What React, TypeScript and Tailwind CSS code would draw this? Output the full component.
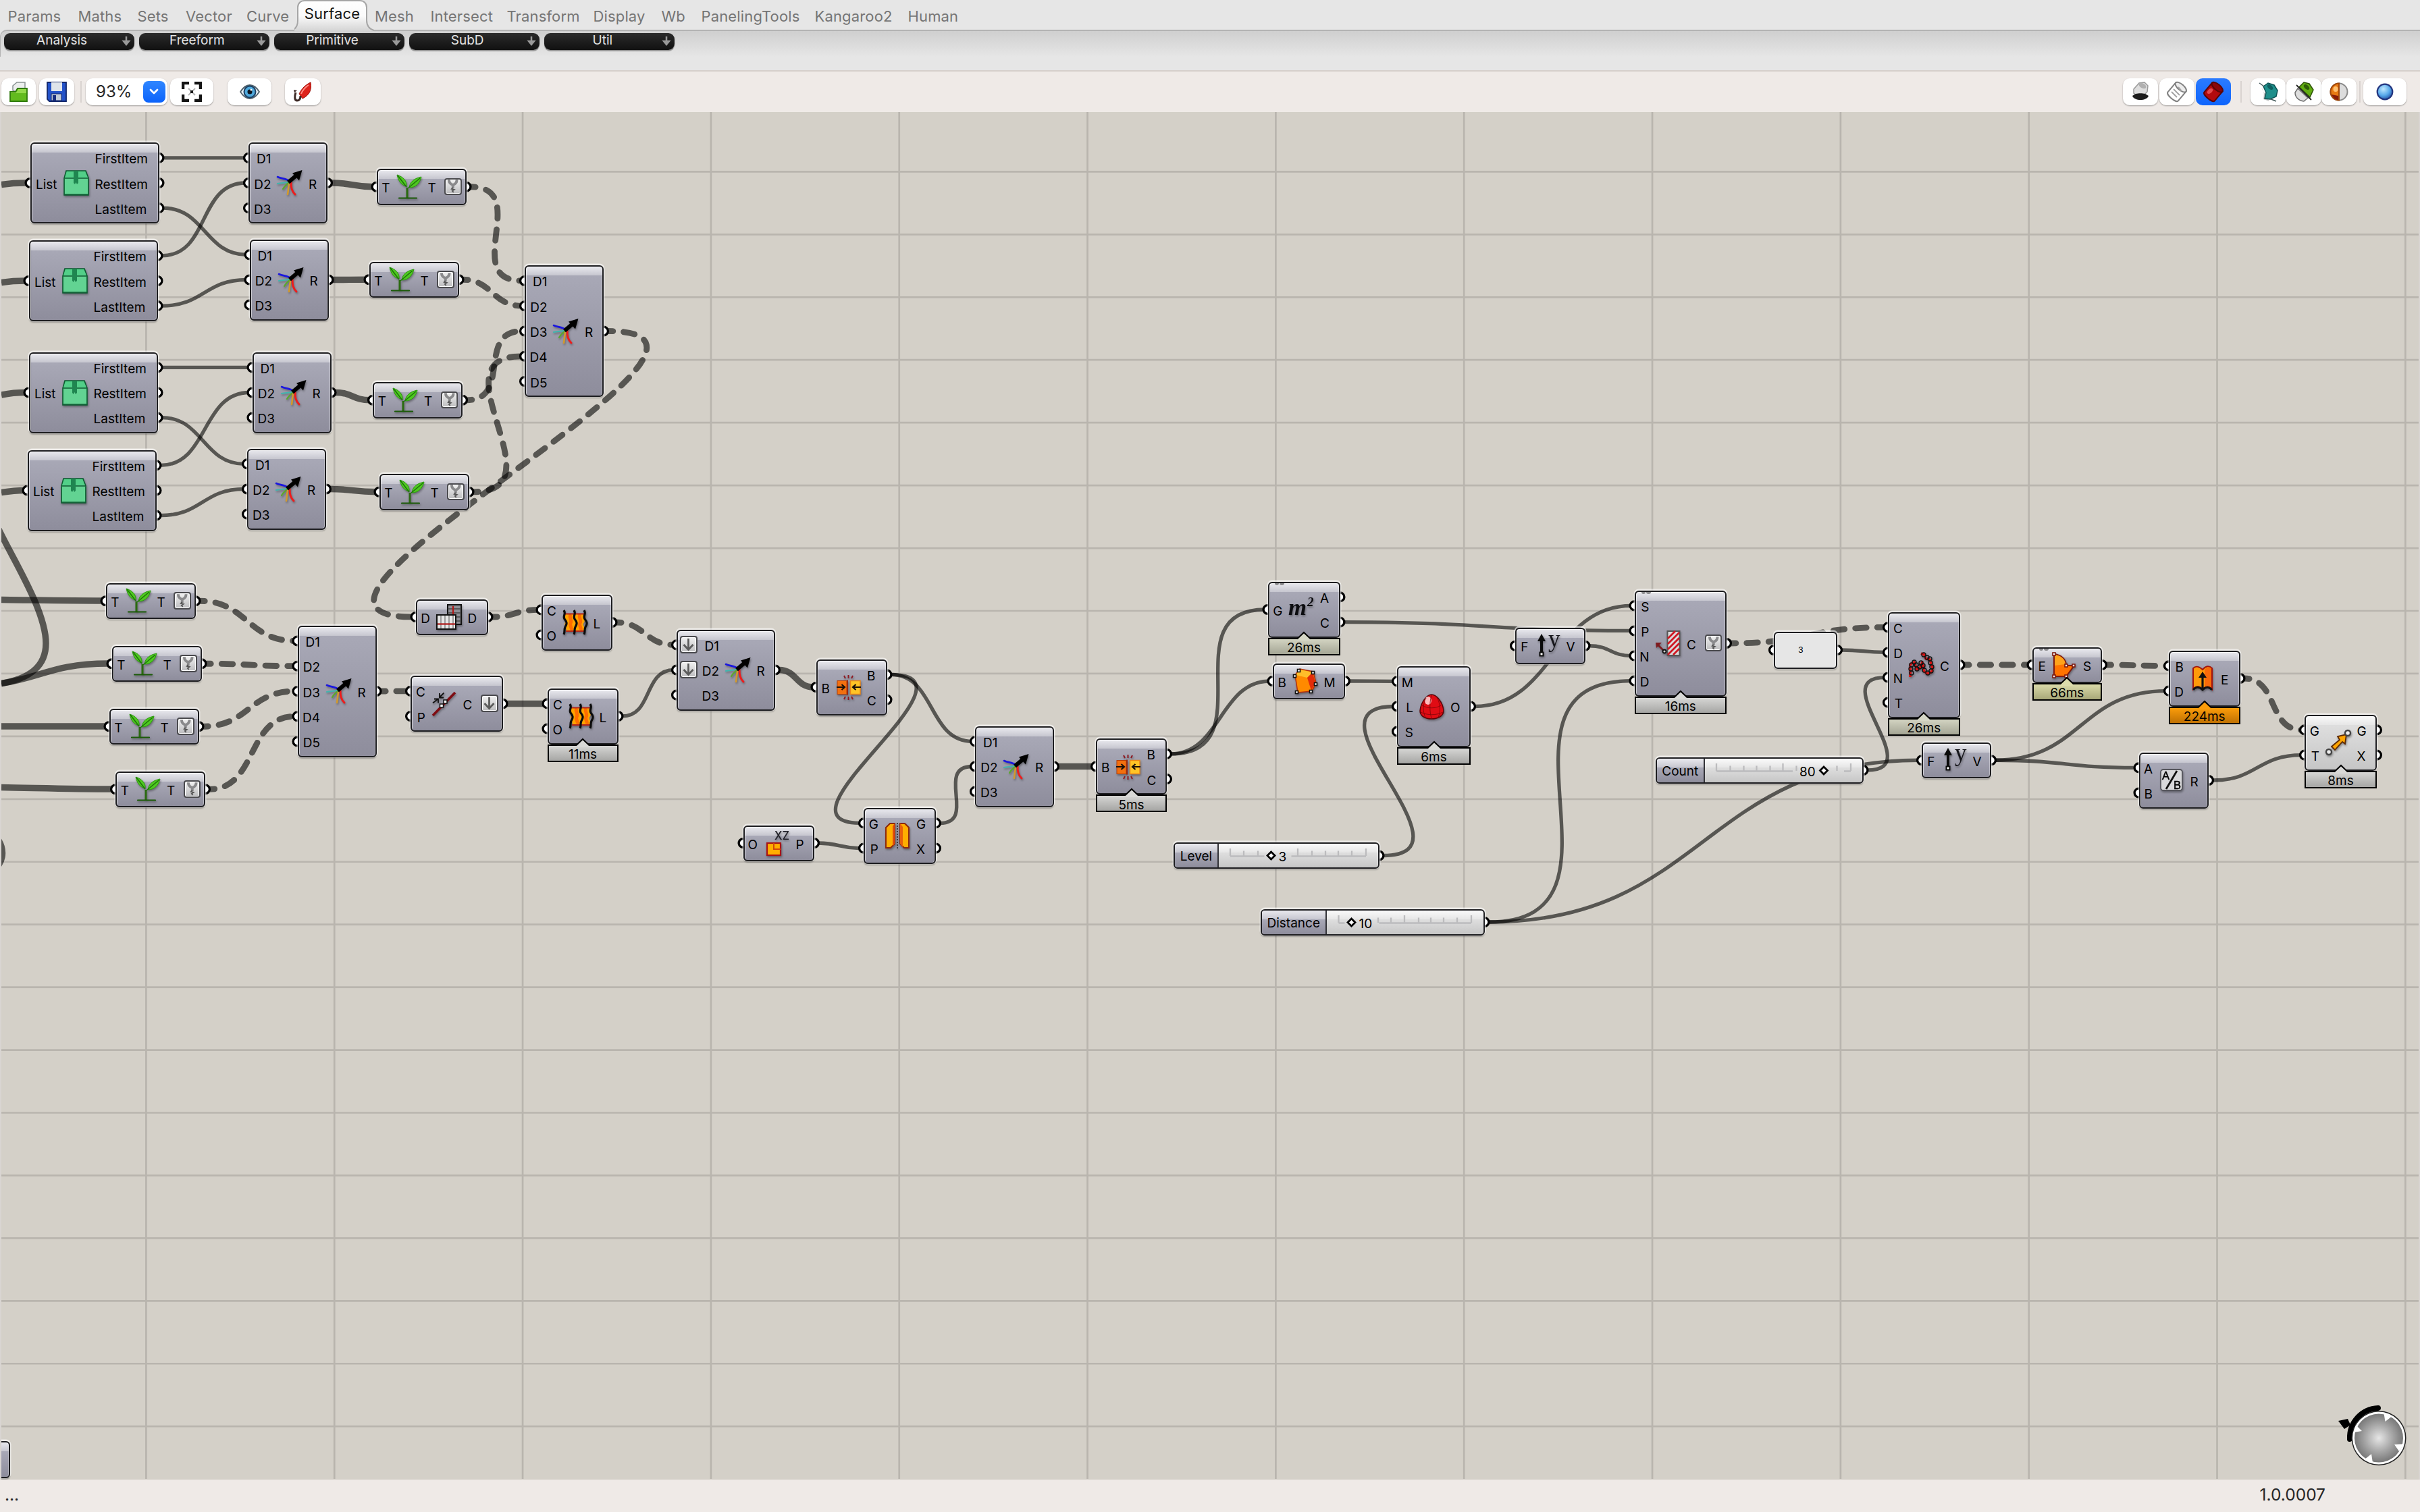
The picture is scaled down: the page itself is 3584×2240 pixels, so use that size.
import type { ReactNode } from 'react';

/* ------------------------------------------------------------------ */
/* Component icons                                                     */
/* ------------------------------------------------------------------ */

const coils: [number, number][] = [
  [4, 31], [3, 25], [4, 19], [8, 15], [11, 19], [12, 25], [16, 22], [18, 16], [21, 20], [23, 27],
  [28, 31], [33, 28], [34, 22], [32, 16], [31, 10], [27, 8], [22, 4],
];

const glyphs: Record<string, ReactNode> = {
  box: (
    <g>
      <path d="M4 1h29l4 11v25H1V12z" fill="#39b06c" stroke="#0d5a30" strokeWidth="1.6" />
      <path d="M5 2h27l4 9H2z" fill="#52cf88" />
      <rect x="2" y="12" width="34" height="24" fill="#62d392" />
      <path d="M2 12h34M2 36h34" stroke="#135f37" strokeWidth="1.4" />
      <path d="M15 1h7v18l-2 2-1.500-3-1.500 3-2-2z" fill="#1f8650" />
    </g>
  ),
  merge: (
    <g fill="none" strokeLinecap="round">
      <path d="M1 10c6 3 12 2 17 6" stroke="#1a16e0" strokeWidth="2.6" />
      <path d="M1 20c6-1 10-1 15-2" stroke="#3fb5ae" strokeWidth="2" />
      <path d="M9 28c2-4 5-6 8-9" stroke="#5aa82c" strokeWidth="2.200" />
      <path d="M16 36c1-6 1-10 2-15" stroke="#d39a2c" strokeWidth="2.600" />
      <path d="M27 36c-5-5-6-10-6-18" stroke="#ee1c1c" strokeWidth="3" />
      <path d="M17 18L30 7" stroke="#000" strokeWidth="6" strokeLinecap="butt" />
      <path d="M37.500 0L23 4.500l10 11z" fill="#000" />
    </g>
  ),
  sprout: (
    <g>
      <path d="M16 20v15" stroke="#2b6b10" strokeWidth="3" />
      <path d="M4 35.500h26" stroke="#1b5a08" strokeWidth="2.200" strokeLinecap="round" />
      <path d="M1 1c9 3 15 9 14 17C7 16 3 10 1 1z" fill="#4fc722" stroke="#2a9a0c" />
      <path d="M2 2l13 17" stroke="#1d7408" strokeWidth="1.500" />
      <path d="M37 4c-2 9-8 16-18 16 1-9 8-14 18-16z" fill="#4fc722" stroke="#2a9a0c" />
      <path d="M17 21L35 6" stroke="#1d7408" strokeWidth="1.500" />
    </g>
  ),
  flip: (
    <g stroke="#111" strokeWidth="2">
      <rect x="17" y="1" width="20" height="29" fill="#8f8f96" />
      <path d="M17 7h20M17 13h20M17 19h20M17 25h20" stroke="#444" strokeWidth="1.600" />
      <path d="M25 3v26" stroke="#b01616" strokeWidth="2.200" />
      <rect x="1" y="16" width="28" height="21" fill="#e6e6e6" />
      <path d="M7 17v19M13 17v19M19 17v19M25 17v19" stroke="#8a8a8a" strokeWidth="1.600" />
      <path d="M2 29.500h26" stroke="#b01616" strokeWidth="2.200" />
    </g>
  ),
  loft: (
    <g fill="none">
      <path d="M4 6h29c-4 5 3 9 0 13-4 5 4 9 1 13H6c3-4-4-8-1-13 3-5-4-8-1-13z" fill="#ffa400" />
      <path d="M13 7c-3 5 3 9 0 13-2 4 3 8 1 11M27 7c-3 5 3 9 0 13-2 4 3 8 1 11" stroke="#ff6d00" strokeWidth="5" />
      <path d="M4 6.500h29M6 32h28" stroke="#b3261a" strokeWidth="2" />
      <g stroke="#0b0b0b" strokeWidth="3.200">
        <path d="M3 1c4 6-2 8 1 13 4 5 4 7 1 12-2 4 0 7-2 11" />
        <path d="M18 1c4 6-2 8 1 13 4 5 4 7 1 12-2 4 0 7-2 11" />
        <path d="M33 1c4 6-2 8 1 13 4 5 4 7 1 12-2 4 0 7-2 11" />
      </g>
    </g>
  ),
  closest: (
    <g fill="none">
      <path d="M2 36L35 2" stroke="#7e0c12" strokeWidth="3.600" />
      <path d="M2 17.500l7-5.500M4 11.500h6v6M18.500 2.500l-6 6M12 3v6.500h6" stroke="#111" strokeWidth="1.800" />
      <rect x="18" y="13" width="5" height="5" fill="#fff" stroke="#111" strokeWidth="1.500" />
      <rect x="12.500" y="19" width="5" height="5" fill="#fff" stroke="#111" strokeWidth="1.500" />
    </g>
  ),
  cap: (
    <g>
      <rect x="2" y="9.500" width="14" height="20" fill="#f3700f" stroke="#b3400c" strokeWidth="1" />
      <rect x="21.500" y="9.500" width="14.500" height="20" fill="#ffc426" stroke="#e8861a" strokeWidth="1.500" />
      <path d="M17 8.500v22" stroke="#9a2a12" strokeWidth="2" />
      <path d="M1 19h11.500M8.500 15l4.500 4-4.500 4M37 19H25M29.500 15L25 19l4.500 4" stroke="#1a1008" strokeWidth="2.200" fill="none" />
      <path d="M18.500 1v5M12 2l2 4M25 2l-2 4M18.500 33v5M12 37l2-4M25 37l-2-4" stroke="#8d1a22" strokeWidth="2" />
    </g>
  ),
  xz: (
    <g>
      <rect x="5" y="19" width="20" height="18" fill="#ffae00" stroke="#a81414" strokeWidth="2.200" />
      <path d="M15 19v9h10" stroke="#d2460c" strokeWidth="2" fill="none" />
      <text x="16" y="14" fontSize="17" fontFamily="Inter" fontWeight="500" fill="#22222a" textLength="22" lengthAdjust="spacingAndGlyphs">XZ</text>
    </g>
  ),
  mirror: (
    <g>
      <path d="M2 7l6-6h7v30l-6 6H2z" fill="#ffae00" stroke="#8d2a0c" strokeWidth="2" />
      <path d="M15 1v30l-3 4V5z" fill="#e04c0c" />
      <path d="M36 7l-6-6h-7v30l6 6h7z" fill="#ffae00" stroke="#8d2a0c" strokeWidth="2" />
      <path d="M23 1v30l4 5V6z" fill="#e8600c" />
      <path d="M19 0v38" stroke="#222" strokeWidth="1.500" strokeDasharray="2 2" />
    </g>
  ),
  area: (
    <g fontFamily="Liberation Serif" fontStyle="italic" fontWeight="700" fill="#0c0c10">
      <text x="0" y="27" fontSize="33" textLength="27" lengthAdjust="spacingAndGlyphs">m</text>
      <text x="28" y="14" fontSize="19">2</text>
    </g>
  ),
  meshBrep: (
    <g>
      <path d="M4 10l7-9 20 4 4 17-6 12-21 2z" fill="#ff8a00" stroke="#b3300c" strokeWidth="1.500" />
      <path d="M5 10l6-8 19 4-8 8z" fill="#ffbe2a" />
      <path d="M22 14l8-8 4 16-6 11z" fill="#e22c0a" />
      {[[9, 3], [30, 6], [3, 11], [34, 23], [27, 34], [6, 35]].map(([x, y]) => (
        <rect key={x} x={x - 1.500} y={y - 1.500} width="4" height="4" fill="#fff" stroke="#111" strokeWidth="1.600" />
      ))}
    </g>
  ),
  weaver: (
    <g>
      <path d="M18 1c8 0 17 12 18 24 0 8-9 12-18 12S1 33 1 25C2 13 11 1 18 1z" fill="#e00c14" stroke="#5d0408" strokeWidth="1.500" />
      <ellipse cx="13" cy="10" rx="5" ry="6" fill="#ffb9bb" />
      <path d="M4 17c9 5 20 5 28 0M2 27c10 5 23 5 33 0M18 2c-3 10-3 24 0 34M26 5c5 9 6 20 2 30M10 6c-5 9-5 20-1 29" stroke="#7d0508" strokeWidth="0.800" fill="none" />
    </g>
  ),
  unitY: (
    <g>
      <path d="M10 31V8" stroke="#0a0a0a" strokeWidth="4" />
      <path d="M10 1L4 12h12z" fill="#0a0a0a" />
      <rect x="7.500" y="28.500" width="5" height="5" fill="#fff" stroke="#0a0a0a" strokeWidth="2" />
      <text x="20" y="20" fontFamily="Liberation Serif" fontSize="35" fill="#15151a">y</text>
    </g>
  ),
  contour: (
    <g>
      <rect x="18.500" y="1" width="18" height="36" fill="#dcdcdc" stroke="#555" strokeWidth="2" />
      <path d="M19 12L30 1M19 20L36 3M19 28L36 11M19 36L36 19M27 36l9-9" stroke="#cf1722" strokeWidth="2.800" />
      <path d="M13 30L4 21" stroke="#7e1a1e" strokeWidth="2.500" />
      <path d="M1 18h9l-8 8z" fill="#7e1a1e" />
      <circle cx="14" cy="31" r="2.500" fill="#ccc" stroke="#111" strokeWidth="1.800" />
    </g>
  ),
  evaluate: (
    <g fill="none" strokeLinejoin="round">
      <path d="M2 37V18l6-3 4 11 5-3 3-8 2 12c3 7 13 6 13-4l-4-12-6-1-2-6-5-2" stroke="#d81212" strokeWidth="3.600" />
      {coils.map(([x, y]) => (
        <circle key={`${x}-${y}`} cx={x} cy={y} r="3" stroke="#141414" strokeWidth="1.400" />
      ))}
    </g>
  ),
  edgeSrf: (
    <g>
      <path d="M3 3c10 1 18 7 18 17h12L21 36H3z" fill="#ff7300" stroke="#7e1a10" strokeWidth="2" />
      <path d="M4 4c9 1 15 6 16 14L4 20z" fill="#ffa31a" />
      {[[3, 3], [21, 20], [32, 20], [3, 36], [21, 36]].map(([x, y]) => (
        <rect key={x + y * 50} x={x - 2} y={y - 2} width="4" height="4" fill="#fff" stroke="#7e1a10" strokeWidth="1.600" />
      ))}
    </g>
  ),
  extrude: (
    <g>
      <path d="M5 4c4-4 8-3 14 2 5-6 10-6 14-2v31c-4-5-9-5-14 0-5-5-9-5-14 0z" fill="#ff9a0a" stroke="#a3140c" strokeWidth="2" />
      <path d="M22 6c4-4 7-4 10-2v29c-4-4-7-3-10-1z" fill="#f86a0a" />
      <path d="M5 36c4-5 9-5 14 0 5-5 9-5 14 0" stroke="#111" strokeWidth="3" fill="none" />
      <path d="M19 35V15" stroke="#111" strokeWidth="3.200" />
      <path d="M19 9l-6 9h12z" fill="#111" />
    </g>
  ),
  divide: (
    <g>
      <rect x="3" y="3" width="32" height="31" rx="4" fill="#d9d9db" stroke="#55555c" strokeWidth="1.800" />
      <path d="M11 32L27 5" stroke="#111" strokeWidth="2.800" />
      <g fontFamily="Liberation Sans" fontSize="16.500" fill="#000" stroke="#000" strokeWidth="0.500">
        <text x="5" y="18">A</text>
        <text x="22" y="32">B</text>
      </g>
    </g>
  ),
  move: (
    <g>
      <path d="M9 25l12-10-3-5 13-3-2 14-4-3-11 12z" fill="#ffa500" stroke="#5d2a05" strokeWidth="1.800" />
      <circle cx="33" cy="5" r="4" fill="#eee" stroke="#444" strokeWidth="2.400" />
      <circle cx="5" cy="33" r="4" fill="#eee" stroke="#444" strokeWidth="2.400" />
    </g>
  ),
};

/* ------------------------------------------------------------------ */
/* Graph data                                                          */
/* ------------------------------------------------------------------ */

type NodeDef = {
  id: string;
  x: number;
  y: number;
  w: number;
  h: number;
  ins: string[];
  outs: string[];
  inR: number;
  outL: number;
  icon: string;
  timer?: string;
  tone?: 'gray' | 'olive' | 'yellow' | 'orange';
  outBadge?: 'fork' | 'down';
  inBadges?: number;
  light?: boolean;
  dots?: boolean;
};

const list = (id: string, x: number, y: number): NodeDef => ({
  id, x, y, w: 191, h: 120, ins: ['List'], outs: ['FirstItem', 'RestItem', 'LastItem'], inR: 40, outL: 96, icon: 'box',
});
const merge = (id: string, x: number, y: number, n = 3): NodeDef => ({
  id, x, y, w: 117, h: n === 3 ? 120 : 195, ins: ['D1', 'D2', 'D3', 'D4', 'D5'].slice(0, n), outs: ['R'], inR: 33.5, outL: 89, icon: 'merge',
});
const tree = (id: string, x: number, y: number): NodeDef => ({
  id, x, y, w: 133, h: 53.5, ins: ['T'], outs: ['T'], inR: 20, outL: 76, icon: 'sprout', outBadge: 'fork',
});

const nodes: NodeDef[] = [
  list('L1', 44.500, 211),
  list('L2', 42.500, 356),
  list('L3', 42.500, 521.500),
  list('L4', 40.500, 666.500),
  merge('M1', 368, 211),
  merge('M2', 369.500, 354.500),
  merge('M3', 373.500, 521.500),
  merge('M4', 366, 664.500),
  tree('T1', 557.500, 250),
  tree('T2', 546.500, 387.500),
  tree('T3', 552, 566),
  tree('T4', 561.500, 702),
  tree('T5', 156.500, 863.500),
  tree('T6', 165.500, 956.500),
  tree('T7', 161.500, 1049.500),
  tree('T8', 171, 1142.500),
  merge('MB', 777, 393, 5),
  merge('M5', 440.500, 926.500, 5),
  { id: 'FL', x: 615.500, y: 887.500, w: 107, h: 53, ins: ['D'], outs: ['D'], inR: 21.500, outL: 77, icon: 'flip' },
  { id: 'LO1', x: 801.500, y: 880.500, w: 105, h: 83, ins: ['C', 'O'], outs: ['L'], inR: 22.500, outL: 77, icon: 'loft' },
  { id: 'CC', x: 608, y: 1001, w: 136.500, h: 83, ins: ['C', 'P'], outs: ['C'], inR: 22, outL: 77.500, icon: 'closest', outBadge: 'down' },
  { id: 'LO2', x: 810.500, y: 1019.500, w: 105, h: 83, ins: ['C', 'O'], outs: ['L'], inR: 22.500, outL: 77, icon: 'loft', timer: '11ms' },
  { id: 'M6', x: 1002, y: 932.500, w: 146, h: 120, ins: ['D1', 'D2', 'D3'], outs: ['R'], inR: 63, outL: 118.500, icon: 'merge', inBadges: 2 },
  { id: 'CAP1', x: 1208.500, y: 976.500, w: 105, h: 83, ins: ['B'], outs: ['B', 'C'], inR: 20.500, outL: 75.500, icon: 'cap' },
  merge('M7', 1444, 1075.500),
  { id: 'CAP2', x: 1623, y: 1094, w: 105, h: 83, ins: ['B'], outs: ['B', 'C'], inR: 20.500, outL: 75.500, icon: 'cap', timer: '5ms' },
  { id: 'XZ', x: 1100.500, y: 1222.500, w: 105.500, h: 53, ins: ['O'], outs: ['P'], inR: 21.500, outL: 78, icon: 'xz' },
  { id: 'MI', x: 1279, y: 1196.500, w: 107, h: 83, ins: ['G', 'P'], outs: ['G', 'X'], inR: 22, outL: 78, icon: 'mirror' },
  { id: 'AR', x: 1877.500, y: 861.500, w: 107, h: 83, ins: ['G'], outs: ['A', 'C'], inR: 22, outL: 77.500, icon: 'area', timer: '26ms', tone: 'olive', dots: true },
  { id: 'MBR', x: 1884.500, y: 982.500, w: 107.500, h: 53, ins: ['B'], outs: ['M'], inR: 20.500, outL: 76, icon: 'meshBrep' },
  { id: 'WV', x: 2069, y: 986.500, w: 109, h: 120, ins: ['M', 'L', 'S'], outs: ['O'], inR: 24, outL: 79, icon: 'weaver', timer: '6ms' },
  { id: 'Y1', x: 2244, y: 930, w: 103.500, h: 53.500, ins: ['F'], outs: ['V'], inR: 19.500, outL: 75.500, icon: 'unitY' },
  { id: 'CO', x: 2420.500, y: 874.500, w: 136.500, h: 157, ins: ['S', 'P', 'N', 'D'], outs: ['C'], inR: 22, outL: 77.500, icon: 'contour', timer: '16ms', outBadge: 'fork', dots: true },
  { id: 'BM', x: 2796, y: 906.500, w: 106.500, h: 157, ins: ['C', 'D', 'N', 'T'], outs: ['C'], inR: 22, outL: 77, icon: 'evaluate', timer: '26ms', tone: 'olive' },
  { id: 'Y2', x: 2846, y: 1099.500, w: 103, h: 53.500, ins: ['F'], outs: ['V'], inR: 19.500, outL: 75.500, icon: 'unitY' },
  { id: 'ES', x: 3009.500, y: 958.500, w: 103.500, h: 53, ins: ['E'], outs: ['S'], inR: 20.500, outL: 75.500, icon: 'edgeSrf', timer: '66ms', tone: 'yellow', dots: true },
  { id: 'EX', x: 3212, y: 963.500, w: 105.500, h: 83, ins: ['B', 'D'], outs: ['E'], inR: 22, outL: 77, icon: 'extrude', timer: '224ms', tone: 'orange' },
  { id: 'DV', x: 3167.500, y: 1114.500, w: 103.500, h: 83, ins: ['A', 'B'], outs: ['R'], inR: 20.500, outL: 76, icon: 'divide' },
  { id: 'MV', x: 3413, y: 1058.500, w: 107, h: 83, ins: ['G', 'T'], outs: ['G', 'X'], inR: 22, outL: 77.500, icon: 'move', timer: '8ms', light: true },
];

type SliderDef = { id: string; name: string; value: string; x: number; y: number; w: number; split: number; ticks: number[]; knob: number; text: number; h: number };

const sliders: SliderDef[] = [
  { id: 'SL', name: 'Level', value: '3', x: 1738, y: 1248, w: 304.500, h: 39, split: 66, knob: 1882.500, text: 1893.500, ticks: [1822, 1842, 1863, 0, 0, 1922, 1943, 1963, 1982, 2002, 2023] },
  { id: 'SD', name: 'Distance', value: '10', x: 1866.500, y: 1346.500, w: 332, h: 39, split: 97.500, knob: 2001.500, text: 2012.500, ticks: [1982.500, 0, 0, 2041, 2060, 2080, 2101, 2119, 2138, 2158, 2179] },
  { id: 'SC', name: 'Count', value: '80', x: 2452, y: 1121.500, w: 307.500, h: 39, split: 71.500, knob: 2700.500, text: 2664.500, ticks: [2541.500, 2562, 2582, 2601, 2621, 2640, 2660, 0, 0, 2720, 2740.500] },
];

type Pt = [number, number];
const rowY = (n: NodeDef, i: number, count: number) => n.y + 4.300 + ((i + 0.500) * (n.h - 8.600)) / count;
const byId = new Map(nodes.map((n) => [n.id, n]));
const extraOut: Record<string, Pt> = { SL: [2042.500, 1267.500], SD: [2198.500, 1366], SC: [2759.500, 1141], PN: [2721, 963] };
const extraIn: Record<string, Pt> = { PN: [2627, 963] };
const outPt = (id: string, i = 0): Pt => {
  const n = byId.get(id);
  return n ? [n.x + n.w, rowY(n, i, n.outs.length)] : extraOut[id];
};
const inPt = (id: string, i = 0): Pt => {
  const n = byId.get(id);
  return n ? [n.x, rowY(n, i, n.ins.length)] : extraIn[id];
};

type Kind = 'item' | 'list' | 'tree';
const wires: [string, number, string, number, Kind][] = [
  ['L1', 0, 'M1', 0, 'item'], ['L1', 2, 'M2', 0, 'item'], ['L2', 0, 'M1', 1, 'item'], ['L2', 2, 'M2', 1, 'item'],
  ['L3', 0, 'M3', 0, 'item'], ['L3', 2, 'M4', 0, 'item'], ['L4', 0, 'M3', 1, 'item'], ['L4', 2, 'M4', 1, 'item'],
  ['M1', 0, 'T1', 0, 'list'], ['M2', 0, 'T2', 0, 'list'], ['M3', 0, 'T3', 0, 'list'], ['M4', 0, 'T4', 0, 'list'],
  ['T1', 0, 'MB', 0, 'tree'], ['T2', 0, 'MB', 1, 'tree'], ['T3', 0, 'MB', 2, 'tree'], ['T4', 0, 'MB', 3, 'tree'],
  ['MB', 0, 'FL', 0, 'tree'], ['FL', 0, 'LO1', 0, 'tree'], ['LO1', 0, 'M6', 0, 'tree'],
  ['T5', 0, 'M5', 0, 'tree'], ['T6', 0, 'M5', 1, 'tree'], ['T7', 0, 'M5', 2, 'tree'], ['T8', 0, 'M5', 3, 'tree'],
  ['M5', 0, 'CC', 0, 'tree'], ['CC', 0, 'LO2', 0, 'list'], ['LO2', 0, 'M6', 1, 'item'], ['M6', 0, 'CAP1', 0, 'list'],
  ['CAP1', 0, 'M7', 0, 'item'], ['CAP1', 0, 'MI', 0, 'item'], ['XZ', 0, 'MI', 1, 'item'], ['MI', 0, 'M7', 1, 'item'],
  ['M7', 0, 'CAP2', 0, 'list'], ['CAP2', 0, 'AR', 0, 'item'], ['CAP2', 0, 'MBR', 0, 'item'], ['MBR', 0, 'WV', 0, 'item'],
  ['SL', 0, 'WV', 1, 'item'], ['AR', 1, 'CO', 1, 'item'], ['WV', 0, 'CO', 0, 'item'], ['Y1', 0, 'CO', 2, 'item'],
  ['SD', 0, 'CO', 3, 'item'], ['SD', 0, 'Y2', 0, 'item'], ['CO', 0, 'BM', 0, 'tree'], ['PN', 0, 'BM', 1, 'item'],
  ['SC', 0, 'BM', 2, 'item'], ['BM', 0, 'ES', 0, 'tree'], ['ES', 0, 'EX', 0, 'tree'], ['Y2', 0, 'EX', 1, 'item'],
  ['Y2', 0, 'DV', 0, 'item'], ['EX', 0, 'MV', 0, 'tree'], ['DV', 0, 'MV', 1, 'item'],
];

function wirePath([ax, ay]: Pt, [bx, by]: Pt) {
  const x1 = ax + 6;
  const x2 = bx - 4;
  const c = Math.max(Math.abs(x2 - x1) / 2, Math.abs(by - ay) * 0.664);
  return `M${x1} ${ay}C${x1 + c} ${ay} ${x2 - c} ${by} ${x2} ${by}`;
}

const incoming = [
  'M2 273.500C12 272 24 271 40 271',
  'M2 418.500C12 417 24 416 38 416',
  'M2 585C12 583 24 581.500 38 581.500',
  'M2 729.500C12 728 24 726.500 36 726.500',
  'M2 888.500C50 889 100 890 152 890',
  'M2 1012.500C60 1004 80 983 160 983',
  'M2 1076H156',
  'M2 1166.500C60 1167.500 110 1169 166 1169',
  'M-2 784C20 830 68 905 68 953C68 990 40 1006 2 1012.500',
  'M-4 1242C6 1256 6 1272 -4 1284',
];

/* ------------------------------------------------------------------ */
/* Canvas pieces                                                       */
/* ------------------------------------------------------------------ */

function Wires() {
  const ports: Pt[] = [
    ...nodes.flatMap((n) => [...n.ins.map((_, i) => inPt(n.id, i)), ...n.outs.map((_, i) => outPt(n.id, i))]),
    ...Object.values(extraOut),
    ...Object.values(extraIn),
  ];
  return (
    <svg className="absolute left-0 top-0" width="3584" height="2240" viewBox="0 0 3584 2240" fill="none">
      <g stroke="#b9b5ae" strokeWidth="2.700">
        {Array.from({ length: 13 }, (_, i) => (
          <path key={i} d={`M${216.400 + i * 278.830} 166V2191`} />
        ))}
        {Array.from({ length: 21 }, (_, i) => (
          <path key={i} d={`M2 ${254.400 + i * 92.940}H3582`} />
        ))}
      </g>
      <g stroke="#000" strokeOpacity="0.590">
        {incoming.map((d) => (
          <path key={d} d={d} strokeWidth="9.500" />
        ))}
        {wires.map(([a, ai, b, bi, kind]) => (
          <path
            key={a + ai + b + bi}
            d={wirePath(outPt(a, ai), inPt(b, bi))}
            strokeWidth={kind === 'item' ? 5.300 : kind === 'list' ? 9.500 : 8.800}
            strokeLinecap={kind === 'tree' ? 'round' : 'butt'}
            strokeDasharray={kind === 'tree' ? '16.600 16' : undefined}
            strokeDashoffset={kind === 'tree' ? 9 : undefined}
          />
        ))}
      </g>
      <g fill="#fff" stroke="#000" strokeWidth="3.300">
        {ports.map(([x, y]) => (
          <circle key={`${x}-${y}`} cx={x} cy={y} r="6.400" />
        ))}
      </g>
    </svg>
  );
}

function Badge({ kind }: { kind: 'fork' | 'down' }) {
  return (
    <span className="flex size-[25.500px] shrink-0 items-center justify-center rounded-[4px] border-2 border-[#4a4a4e] bg-linear-to-b from-[#f2f2f2] to-[#bdbdbf] shadow-[inset_0_0_0_1px_#ffffff]">
      {kind === 'down' ? (
        <svg width="19" height="20" viewBox="0 0 19 20" fill="none" stroke="#5c5c5c" strokeWidth="2.800">
          <path d="M9.500 1v16M2.500 10l7 7.500 7-7.500" />
        </svg>
      ) : (
        <svg width="22" height="22" viewBox="0 0 22 22" fill="none">
          <path d="M5 1c0 5 3 7 6 8 3-1 6-3 6-8M11 9v5" stroke="#8a8a8c" strokeWidth="4" />
          <path d="M11 13l-2 2 4 1-3 2 2 2" stroke="#555" strokeWidth="1.800" />
        </svg>
      )}
    </span>
  );
}

const tones = {
  gray: 'from-[#d6d6d4] to-[#a6a6a4]',
  olive: 'from-[#d3d4c2] to-[#a5a695]',
  yellow: 'from-[#dadaa9] to-[#a8a879]',
  orange: 'from-[#fb9c0a] to-[#c07204]',
};
const tipFill = { gray: '#d9d9d7', olive: '#d6d7c6', yellow: '#dcdcac', orange: '#fb9c0a' };

function Timer({ text, tone }: { text: string; tone: keyof typeof tones }) {
  return (
    <div className={`absolute -inset-x-[2px] top-[calc(100%+2px)] flex h-[26px] items-center justify-center border-2 border-black bg-linear-to-b pt-[4px] text-[19px] leading-none ${tones[tone]}`}>
      {text}
      <svg className="absolute -top-[12px] left-1/2 -ml-[11px]" width="22" height="14" viewBox="0 0 22 14">
        <path d="M1 12L11 2l10 10v2H1z" fill={tipFill[tone]} />
        <path d="M1 11.500L11 2l10 9.500" fill="none" stroke="#000" strokeWidth="2" />
      </svg>
    </div>
  );
}

const body =
  'bg-[linear-gradient(to_bottom,#e9e9ee_0px,#c6c6cf_13px,#a8a8b6_13.500px,#8e8d9c_100%)]';
const lightBody =
  'bg-[linear-gradient(to_bottom,#fafafa_0px,#e6e6e6_13px,#dedede_13.500px,#c6c6c6_100%)]';
const shell =
  'absolute box-border rounded-[6px] border-2 border-[#1d1d20] shadow-[inset_1px_1px_0_0_rgba(255,255,255,0.550),inset_-1px_0_0_0_rgba(255,255,255,0.350),0_-1px_0_1.500px_rgba(255,255,255,0.600),0_2px_2px_0_rgba(0,0,0,0.250)]';

function GraphNode({ n }: { n: NodeDef }) {
  return (
    <div className={`${shell} flex ${n.light ? lightBody : body}`} style={{ left: n.x, top: n.y, width: n.w, height: n.h }}>
      {n.dots && (
        <div className="absolute left-[8px] top-0 flex gap-[1px]">
          <i className="h-[3px] w-[6.500px] rounded-b-full bg-[#8b8b8d]" />
          <i className="h-[3px] w-[6.500px] rounded-b-full bg-[#8b8b8d]" />
        </div>
      )}
      <div className="flex shrink-0 flex-col pb-[0.300px] pt-[4.300px]" style={{ width: n.inR - 2 }}>
        {n.ins.map((t, i) => (
          <div key={t} className="flex min-h-0 flex-1 items-center justify-end">
            {n.inBadges && i < n.inBadges ? (
              <span className="-mt-[5px] mr-auto ml-[3px] flex">
                <Badge kind="down" />
              </span>
            ) : null}
            <span>{t}</span>
          </div>
        ))}
      </div>
      <div className="flex min-w-0 flex-1 items-center justify-center">
        <svg className="shrink-0 overflow-visible drop-shadow-[1px_2px_1.500px_rgba(0,0,0,0.350)]" width="38" height="38" viewBox="0 0 38 38">
          {glyphs[n.icon]}
        </svg>
      </div>
      <div className="flex shrink-0 flex-col pb-[0.300px] pt-[4.300px]" style={{ width: n.w - n.outL - 2 }}>
        {n.outs.map((t) => (
          <div key={t} className="flex min-h-0 flex-1 items-center">
            <span>{t}</span>
            {n.outBadge && (
              <span className="-mt-[5px] ml-auto mr-[5px] flex">
                <Badge kind={n.outBadge} />
              </span>
            )}
          </div>
        ))}
      </div>
      {n.timer && <Timer text={n.timer} tone={n.tone ?? 'gray'} />}
    </div>
  );
}

function Slider({ s }: { s: SliderDef }) {
  const trackX = s.x + s.split;
  return (
    <div className={`${shell} flex overflow-hidden ${lightBody}`} style={{ left: s.x, top: s.y, width: s.w, height: s.h }}>
      <div className={`flex shrink-0 items-center justify-center border-r-2 border-[#333338] pt-[2px] ${body}`} style={{ width: s.split - 1 }}>
        {s.name}
      </div>
      <svg className="-ml-px shrink-0 overflow-visible" width={s.w - s.split} height="35" viewBox={`${trackX} 2 ${s.w - s.split} 35`} fill="none">
        <g stroke="#bcbcbe" strokeWidth="2.300">
          {s.ticks.map((t, i) => (t ? <path key={t} d={`M${t} ${i % 5 === 0 ? 9 : 12.500}V20`} /> : null))}
          <path d={`M${s.ticks[0]} 20.500H${Math.min(s.knob, s.text) - 10}M${Math.max(s.knob, s.text) + (s.value.length * 11 + 8)} 20.500H${s.ticks[10]}`} />
        </g>
        <path d={`M${s.knob - 5.500} 19.500l5.500-5.500 5.500 5.500-5.500 5.500z`} fill="#fff" stroke="#000" strokeWidth="2.800" />
        <text x={s.text} y="28" fontSize="19" fill="#000">{s.value}</text>
      </svg>
    </div>
  );
}

function Compass() {
  return (
    <svg className="absolute left-[3460px] top-[2080px]" width="110" height="100" viewBox="3460 2080 110 100">
      <path d="M3480 2132c-1-25 18-45 42-46" fill="none" stroke="#000" strokeWidth="8" strokeLinecap="round" />
      <path d="M3463 2105l14-3 4 9-9 6z" fill="#000" />
      <defs>
        <radialGradient id="dial">
          <stop offset="0" stopColor="#e6e6e6" />
          <stop offset="0.550" stopColor="#a8a8a8" />
          <stop offset="1" stopColor="#787878" />
        </radialGradient>
      </defs>
      <circle cx="3523" cy="2130.500" r="40.500" fill="#222" />
      <circle cx="3523" cy="2130.500" r="39" fill="#fff" />
      <circle cx="3523" cy="2130.500" r="36" fill="url(#dial)" />
      <path d="M3530.500 2094l2 12 9-7zM3486 2122l12-2-9-9zM3560 2139l-14 1 7 10zM3502 2162l10-8 2 13z" fill="#fff" />
    </svg>
  );
}

/* ------------------------------------------------------------------ */
/* Chrome                                                              */
/* ------------------------------------------------------------------ */

const tabsBefore = [
  ['Params', 'w-[104px]'], ['Maths', 'w-[88px]'], ['Sets', 'w-[71.500px]'], ['Vector', 'w-[90px]'], ['Curve', 'w-[71px]'],
];
const tabsAfter = [
  ['Mesh', 'w-[82.500px]'], ['Intersect', 'w-[113px]'], ['Transform', 'w-[128px]'], ['Display', 'w-[101px]'], ['Wb', 'w-[59px]'],
  ['PanelingTools', 'w-[168px]'], ['Kangaroo2', 'w-[138px]'], ['Human', 'w-[90px]'],
];

function TabStrip() {
  return (
    <div className="relative h-[106px] border-b-2 border-[#d5cfcb] bg-[#e6e6e6]">
      <div className="absolute inset-x-0 top-[44px] h-[40px] rounded-tl-[10px] border-l border-t-2 border-[#b3b3b3] bg-linear-to-b from-[#cfcfcf] to-[#e6e6e6]" />
      <div className="relative flex h-[47px] items-start pl-[11.500px] text-[22px] tracking-[0.15px] text-[#757575]">
        {tabsBefore.map(([t, w]) => (
          <span key={t} className={`${w} mt-[11px] shrink-0 leading-[26px]`}>{t}</span>
        ))}
        <span className="relative flex h-[47px] w-[119px] shrink-0 justify-center">
          <svg className="absolute left-0 top-0" width="118" height="47" viewBox="0 0 118 47">
            <defs>
              <linearGradient id="tab" x1="0" y1="0" x2="0" y2="1">
                <stop offset="0" stopColor="#ffffff" />
                <stop offset="0.500" stopColor="#fafafa" />
                <stop offset="1" stopColor="#d2d2d2" />
              </linearGradient>
            </defs>
            <path d="M-7 45.500C1 44 5 38 5 30V11C5 5 9 1 15 1h82c6 0 10 4 10 10v19c0 8 4 14 12 15.500V47H-7z" fill="url(#tab)" />
            <path d="M-4 45C2 43 5 38 5 30V11C5 5 9 1 15 1h82c6 0 10 4 10 10v19c0 8 4 13 11 15" fill="none" stroke="#a6a6a6" strokeWidth="2" />
          </svg>
          <span className="relative -ml-[7px] mt-[7px] leading-[26px] text-[#161616]">Surface</span>
        </span>
        {tabsAfter.map(([t, w]) => (
          <span key={t} className={`${w} mt-[11px] shrink-0 leading-[26px]`}>{t}</span>
        ))}
      </div>
      <div className="relative flex gap-[7px] pl-[5.500px] pt-[2px]">
        {['Analysis', 'Freeform', 'Primitive', 'SubD', 'Util'].map((t) => (
          <div key={t} className="relative flex h-[25px] w-[193.200px] justify-center rounded-[9px] bg-linear-to-b from-[#2b2b2b] to-[#111111] pr-[21px] text-[19px] leading-[21px] text-[#e4e4e4] shadow-[0_2px_1px_0_rgba(0,0,0,0.350)]">
            {t}
            <svg className="absolute right-[5px] top-[5px]" width="14" height="14" viewBox="0 0 14 14">
              <path d="M7 0v11M3 7l4 5 4-5z" stroke="#9a9a9a" strokeWidth="2.500" fill="#9a9a9a" />
            </svg>
          </div>
        ))}
      </div>
    </div>
  );
}

const card = 'flex h-[40px] shrink-0 items-center rounded-[10px] bg-white shadow-[0_1px_2px_0_rgba(0,0,0,0.350)]';
const btn = `${card} justify-center`;

function Cylinder({ fill, top, stroke }: { fill: string; top: string; stroke: string }) {
  return (
    <g transform="rotate(40 16 16)" stroke={stroke} strokeWidth="2">
      <path d="M6 7v18c0 5 20 5 20 0V7z" fill={fill} />
      <ellipse cx="16" cy="7" rx="10" ry="4.500" fill={top} />
    </g>
  );
}

function Toolbar() {
  return (
    <div className="flex h-[60px] items-center bg-[#efeae7] px-[2px] pt-0">
      <div className={`${btn} w-[51px]`}>
        <svg width="28" height="32" viewBox="0 0 28 32">
          <path d="M5 14V7l6-5h12v20z" fill="#eceeee" stroke="#8a9494" strokeWidth="1.500" />
          <path d="M1 30V16h8l3-5h14v19z" fill="#62bb1e" stroke="#2f7a0c" strokeWidth="1.800" />
          <path d="M2 17h8l3-5h12v6H2z" fill="#93da4a" />
        </svg>
      </div>
      <div className={`${btn} ml-[5px] w-[52px]`}>
        <svg width="30" height="30" viewBox="0 0 30 30">
          <path d="M1 1h28v28H4l-3-3z" fill="#2352c8" stroke="#12276b" strokeWidth="1.800" />
          <rect x="7" y="1" width="16" height="13" fill="#dfe4ea" />
          <rect x="7" y="18" width="15" height="10" fill="#c3ccd8" stroke="#12276b" />
          <rect x="9" y="20" width="5" height="8" fill="#1a2f80" />
        </svg>
      </div>
      <div className="ml-[9px] h-[32px] w-[2px] bg-[#d9d3d0]" />
      <div className={`${card} ml-[5.500px] w-[121px] justify-between pl-[15.500px] pr-[3px] text-[24px] text-[#262626]`}>
        93%
        <span className="flex h-[32px] w-[33px] items-center justify-center rounded-[8px] bg-linear-to-b from-[#2f86ff] to-[#0a62fb]">
          <svg width="14" height="10" viewBox="0 0 14 10" fill="none" stroke="#fff" strokeWidth="2.800" strokeLinecap="round" strokeLinejoin="round">
            <path d="M2 2l5 5 5-5" />
          </svg>
        </span>
      </div>
      <div className={`${btn} ml-[4.500px] w-[64px]`}>
        <svg width="30" height="30" viewBox="0 0 30 30" fill="none" stroke="#141414" strokeWidth="4.500">
          <path d="M2 11V2h9M19 2h9v9M28 19v9h-9M11 28H2v-9" />
          <path d="M10 10l10 10M20 10L10 20" stroke="#b5b5b5" strokeWidth="2" />
          <rect x="13" y="13" width="4" height="4" fill="#141414" stroke="none" />
        </svg>
      </div>
      <div className={`${btn} ml-[21px] w-[65px]`}>
        <svg width="30" height="22" viewBox="0 0 30 22">
          <path d="M1 11C6 3 11 1 15 1s9 2 14 10c-5 8-10 10-14 10S6 19 1 11z" fill="#e4eef4" stroke="#51626c" strokeWidth="1.800" />
          <circle cx="15" cy="11" r="8.500" fill="#4fa9dc" stroke="#1b3f63" strokeWidth="2" />
          <circle cx="15" cy="11" r="3.500" fill="#0b1622" />
          <circle cx="17" cy="8" r="1.500" fill="#fff" />
        </svg>
      </div>
      <div className={`${btn} ml-[19.500px] w-[53px]`}>
        <svg width="28" height="30" viewBox="0 0 28 30">
          <path d="M26 1c2 12-2 19-12 24l-5-7C13 10 18 5 26 1z" fill="#dd241c" stroke="#9a120c" />
          <path d="M23 5c-6 4-9 8-11 13" stroke="#ff8c84" strokeWidth="2" fill="none" />
          <path d="M11 21c0 5-2 7-5 7-4 0-4-6-2-12" stroke="#3d2a26" strokeWidth="3" fill="none" />
          <path d="M2 16l-1-4 5 1z" fill="#3d2a26" />
        </svg>
      </div>
      <div className="flex-1" />
      <div className="flex gap-[2px]">
        <div className={`${btn} w-[52px]`}>
          <svg width="32" height="32" viewBox="0 0 32 32">
            <path d="M6 12l8-9 8-1 5 5-1 9-6 6-10-1-4-3z" fill="#dedede" stroke="#9a9a9a" strokeWidth="1.500" />
            <ellipse cx="19" cy="7" rx="6" ry="3.500" transform="rotate(30 19 7)" fill="#b0b0b0" />
            <path d="M4 22l5-3c4-1 10-1 14 0l5 3c-3 8-21 8-24 0z" fill="#1d1d1d" />
          </svg>
        </div>
        <div className={`${btn} w-[52px]`}>
          <svg width="32" height="32" viewBox="0 0 32 32">
            <Cylinder fill="#ffffff" top="#ececec" stroke="#808080" />
            <path d="M11 12l9 9M8 16l8 8M18 9l5 6" stroke="#a5a5a5" strokeWidth="2" />
          </svg>
        </div>
        <div className="flex h-[40px] w-[52px] items-center justify-center rounded-[10px] bg-linear-to-b from-[#2a7bff] to-[#0d64fc]">
          <svg width="32" height="32" viewBox="0 0 32 32">
            <Cylinder fill="#b20a0e" top="#8a060a" stroke="#5a0608" />
            <ellipse cx="11" cy="15" rx="5" ry="3" transform="rotate(-40 11 15)" fill="#e04a4e" />
          </svg>
        </div>
      </div>
      <div className="ml-[14px] h-[32px] w-[2px] bg-[#d9d3d0]" />
      <div className="ml-[13px] flex gap-[0.500px]">
        <div className={`${btn} w-[52px]`}>
          <svg width="32" height="32" viewBox="0 0 32 32">
            <path d="M6 10c5 4 4 12 3 17l9 3z" fill="#c2c2c2" />
            <path d="M9 8l7-5 9 3 5 8-2 9-9 4-8-1 2-9z" fill="#1f8f8b" stroke="#0f5455" strokeWidth="1.500" />
            <ellipse cx="19" cy="9" rx="5" ry="3" transform="rotate(40 19 9)" fill="#0f5f60" />
            <path d="M3 3l7 5M18 26l10 4" stroke="#44595a" strokeWidth="1.500" fill="none" />
          </svg>
        </div>
        <div className={`${btn} w-[52px]`}>
          <svg width="32" height="32" viewBox="0 0 32 32">
            <path d="M7 11l-4 6c0 7 5 12 13 13l6-5z" fill="#dedede" stroke="#6e6e6e" strokeWidth="1.500" />
            <path d="M9 9l7-7 8 2 6 9-5 11z" fill="#62ad12" stroke="#2c5205" strokeWidth="1.500" />
            <ellipse cx="20" cy="9" rx="5" ry="3" transform="rotate(40 20 9)" fill="#2f5e07" />
            <path d="M5 6l22 22" stroke="#222" strokeWidth="1.800" />
          </svg>
        </div>
        <div className={`${btn} w-[52px]`}>
          <svg width="30" height="30" viewBox="0 0 30 30">
            <circle cx="15" cy="15" r="12.500" fill="#dcdcdc" stroke="#8a8a8a" strokeWidth="2" />
            <path d="M15 2.500a12.500 12.500 0 0 0 0 25z" fill="#e87a12" stroke="#a2480a" strokeWidth="2" />
            <path d="M4 19c3 6 6 8 10 8v-6z" fill="#8a1c08" />
            <ellipse cx="10" cy="11" rx="3.500" ry="4" fill="#ffc070" />
          </svg>
        </div>
      </div>
      <div className="ml-[4px] h-[32px] w-[2px] bg-[#d9d3d0]" />
      <div className={`${btn} ml-[4px] mr-[18px] w-[64px]`}>
        <svg width="26" height="26" viewBox="0 0 26 26">
          <defs>
            <radialGradient id="ball" cx="0.400" cy="0.320" r="0.700">
              <stop offset="0" stopColor="#bfe8ff" />
              <stop offset="0.600" stopColor="#58a9ea" />
              <stop offset="1" stopColor="#2456a8" />
            </radialGradient>
          </defs>
          <circle cx="13" cy="13" r="11.300" fill="url(#ball)" stroke="#23357f" strokeWidth="2.200" />
        </svg>
      </div>
    </div>
  );
}

export default function App() {
  return (
    <div className="flex h-[2240px] w-[3584px] flex-col overflow-hidden bg-[#efeae7] [font-family:Inter,sans-serif]">
      <TabStrip />
      <Toolbar />
      <div className="relative h-[2026px] overflow-hidden border-x-2 border-[#d9d5d2] bg-[#d4d0c8] text-[19px] leading-none text-black">
        <div className="absolute -left-[2px] -top-[166px] h-[2240px] w-[3584px]">
          <Wires />
          {nodes.map((n) => (
            <GraphNode key={n.id} n={n} />
          ))}
          {sliders.map((s) => (
            <Slider key={s.id} s={s} />
          ))}
          <div className={`${shell} left-[2627px] top-[936px] flex h-[55px] w-[94px] items-center bg-[#e6e6e6] pl-[34px] font-['Liberation_Mono'] text-[13px]`}>3</div>
          <div className={`${shell} -left-[60px] top-[2135px] h-[55px] w-[75px] ${body}`} />
          <Compass />
        </div>
      </div>
      <div className="flex flex-1 items-center justify-between bg-[#efeae7] pb-[3px] pl-[7px] pr-[140px] text-[24.500px] leading-none text-[#262626]">
        <span>...</span>
        <span>1.0.0007</span>
      </div>
    </div>
  );
}
